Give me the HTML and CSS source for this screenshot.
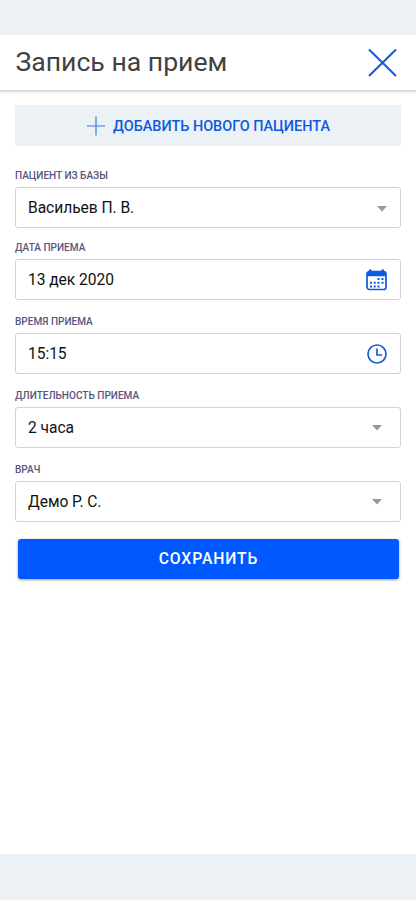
FILE: index.html
```html
<!DOCTYPE html>
<html lang="ru">
<head>
<meta charset="utf-8">
<meta name="viewport" content="width=device-width, initial-scale=1">
<title>Запись на прием</title>
<link rel="stylesheet" href="styles.css">
</head>
<body>
<div class="screen">
  <div class="status-bar"></div>
  <header class="header">
    <h1 class="title"><span>Запись на прием</span></h1>
    <button class="close" aria-label="Закрыть">
      <svg width="28" height="28" viewBox="0 0 28 28"><path d="M1 .5L28 27M28 .5L1 27"/></svg>
    </button>
  </header>
  <main class="form">
    <button class="add">
      <svg width="18" height="20" viewBox="0 0 18 20"><path d="M9 .5V19.500M0 10H18"/></svg>
      <span>ДОБАВИТЬ НОВОГО ПАЦИЕНТА</span>
    </button>
    <div class="field">
      <div class="label"><span>ПАЦИЕНТ ИЗ БАЗЫ</span></div>
      <div class="control control-near"><span>Васильев П. В.</span>
        <svg class="arrow" width="10" height="6" viewBox="0 0 10 6"><path d="M0 0H10L5 5.500Z"/></svg></div>
    </div>
    <div class="field">
      <div class="label"><span>ДАТА ПРИЕМА</span></div>
      <div class="control"><span>13 дек 2020</span>
        <svg class="calendar" width="21" height="22" viewBox="0 0 21 22">
          <rect class="frame" x="1" y="2.500" width="19" height="18" rx="2.500"/>
          <path d="M1 4.500Q1 2.500 3 2.500V.5H5.500V2.500H15.500V.5H18V2.500Q20 2.500 20 4.500V7.200H1Z"/>
          <path class="dots" d="M11.500 10h2M15.500 10h2M4 13.800h2M7.700 13.800h2M11.500 13.800h2M15.500 13.800h2M4 17.500h2M7.700 17.500h2M11.500 17.500h2"/>
        </svg></div>
    </div>
    <div class="field">
      <div class="label"><span>ВРЕМЯ ПРИЕМА</span></div>
      <div class="control"><span>15:15</span>
        <svg class="clock" width="20" height="20" viewBox="0 0 20 20"><circle cx="10" cy="10" r="9"/><path d="M10 4.500V11H15.200"/></svg></div>
    </div>
    <div class="field">
      <div class="label"><span>ДЛИТЕЛЬНОСТЬ ПРИЕМА</span></div>
      <div class="control control-select"><span>2 часа</span>
        <svg class="arrow" width="10" height="6" viewBox="0 0 10 6"><path d="M0 0H10L5 5.500Z"/></svg></div>
    </div>
    <div class="field">
      <div class="label"><span>ВРАЧ</span></div>
      <div class="control control-select"><span>Демо Р. С.</span>
        <svg class="arrow" width="10" height="6" viewBox="0 0 10 6"><path d="M0 0H10L5 5.500Z"/></svg></div>
    </div>
    <button class="save"><span>СОХРАНИТЬ</span></button>
  </main>
  <div class="nav-bar"></div>
</div>
</body>
</html>
```
FILE: styles.css
```css
* {
  box-sizing: border-box;
}

body {
  margin: 0;
  background: #fff;
  font-family: Roboto, "Liberation Sans", sans-serif;
}

button {
  padding: 0;
  border: 0;
  background: none;
  font-family: inherit;
}

svg {
  display: block;
  flex: none;
  overflow: visible;
}

.screen {
  display: flex;
  flex-direction: column;
  height: 900px;
}

.status-bar {
  flex: none;
  height: 35px;
  background: #ebf1f5;
}

.header {
  display: flex;
  flex: none;
  align-items: center;
  justify-content: space-between;
  height: 55px;
  padding: 0 20px 0 15.500px;
  box-shadow: 0 2px 2px rgba(0, 0, 0, 0.17);
}

.title {
  margin: 0 0 2px;
  color: #424242;
  font-size: 26.600px;
  font-weight: 400;
  line-height: 32px;
}

.close path {
  fill: none;
  stroke: #1259dc;
  stroke-width: 2;
}

.form {
  display: flex;
  flex: 1;
  flex-direction: column;
  padding: 15px 15px 0;
}

.add {
  display: flex;
  align-items: center;
  justify-content: center;
  gap: 8px;
  height: 41px;
  margin-bottom: 24px;
  padding-left: 1px;
  background: #ebf1f5;
  color: #0d5ae2;
  font-size: 14.450px;
  font-weight: 500;
}

.add span {
  padding-top: 1px;
}

.add path {
  stroke: #397bdf;
  stroke-width: 1.200;
}

.field {
  margin-bottom: 16px;
}

.field:nth-of-type(1) {
  margin-bottom: 14px;
}

.label {
  margin-bottom: 5px;
  color: #57557d;
  font-size: 10.050px;
  font-weight: 500;
  line-height: 12px;
}

.control {
  display: flex;
  align-items: center;
  justify-content: space-between;
  height: 41px;
  padding: 0 13px 0 12px;
  border: 1px solid #cfd3db;
  border-radius: 3px;
  color: #111;
  font-size: 15.600px;
  letter-spacing: -0.050px;
}

.control-near {
  padding-right: 13px;
}

.control-select {
  padding-right: 18px;
}

.control-near .arrow {
  margin-top: 2px;
}

.arrow {
  fill: #999;
}

.calendar {
  fill: #0f59df;
}

.calendar .frame {
  fill: none;
  stroke: #0f59df;
  stroke-width: 1.700;
}

.calendar .dots {
  stroke: #0f59df;
  stroke-width: 2;
}

.clock {
  fill: none;
  stroke: #1d5bd0;
  stroke-width: 1.700;
}

.save {
  height: 40px;
  margin: 1px 2px 0 3px;
  padding-bottom: 1px;
  border-radius: 3px;
  background: #0059ff;
  box-shadow: 0 1px 3px rgba(0, 0, 0, 0.4);
  color: #fff;
  font-size: 15.700px;
  font-weight: 500;
  letter-spacing: 0.900px;
}

.nav-bar {
  flex: none;
  height: 46px;
  background: #ebf1f5;
}
```
